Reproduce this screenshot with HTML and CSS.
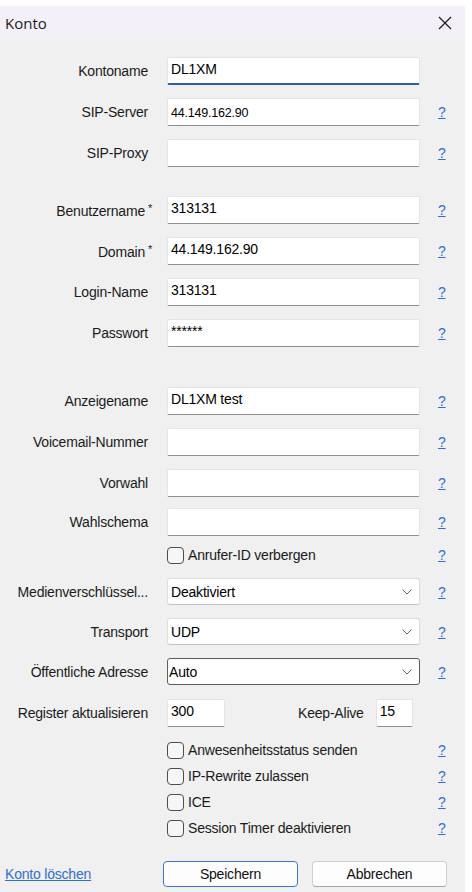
FILE: index.html
```html
<!DOCTYPE html>
<html lang="de">
<head>
<meta charset="utf-8">
<title>Konto</title>
<link rel="stylesheet" href="styles.css">
</head>
<body>
<div class="dialog">
  <header class="titlebar">
    <span class="title">Konto</span>
    <svg class="close" width="14" height="14" viewBox="0 0 14 14" aria-label="Schließen"><path d="M1 1L13 13M13 1L1 13" stroke="#1f1f1f" stroke-width="1.3" fill="none"/></svg>
  </header>
  <main class="content">
    <section class="group">
      <div class="row">
        <label class="lbl">Kontoname</label>
        <input class="field focused" value="DL1XM">
      </div>
      <div class="row">
        <label class="lbl">SIP-Server</label>
        <input class="field small-text" value="44.149.162.90">
        <a class="help" href="#">?</a>
      </div>
      <div class="row">
        <label class="lbl">SIP-Proxy</label>
        <input class="field" value="">
        <a class="help" href="#">?</a>
      </div>
    </section>

    <section class="group g2">
      <div class="row">
        <label class="lbl">Benutzername<span class="req">*</span></label>
        <input class="field" value="313131">
        <a class="help" href="#">?</a>
      </div>
      <div class="row">
        <label class="lbl">Domain<span class="req">*</span></label>
        <input class="field" value="44.149.162.90">
        <a class="help" href="#">?</a>
      </div>
      <div class="row">
        <label class="lbl">Login-Name</label>
        <input class="field" value="313131">
        <a class="help" href="#">?</a>
      </div>
      <div class="row">
        <label class="lbl">Passwort</label>
        <input class="field" value="******">
        <a class="help" href="#">?</a>
      </div>
    </section>

    <section class="group g3">
      <div class="row">
        <label class="lbl">Anzeigename</label>
        <input class="field" value="DL1XM test">
        <a class="help" href="#">?</a>
      </div>
      <div class="row">
        <label class="lbl">Voicemail-Nummer</label>
        <input class="field" value="">
        <a class="help" href="#">?</a>
      </div>
      <div class="row">
        <label class="lbl">Vorwahl</label>
        <input class="field" value="">
        <a class="help" href="#">?</a>
      </div>
      <div class="row tight">
        <label class="lbl">Wahlschema</label>
        <input class="field" value="">
        <a class="help" href="#">?</a>
      </div>
      <div class="row cbrow-first">
        <span class="lbl"></span>
        <label class="cb"><span class="box"></span>Anrufer-ID verbergen</label>
        <a class="help" href="#">?</a>
      </div>
    </section>

    <section class="group g4">
      <div class="row sel">
        <label class="lbl">Medienverschlüssel...</label>
        <div class="select"><span>Deaktiviert</span><svg width="10" height="6" viewBox="0 0 10 6"><path d="M0.5 0.5L5 5L9.5 0.5" stroke="#6b6b6b" stroke-width="1" fill="none"/></svg></div>
        <a class="help" href="#">?</a>
      </div>
      <div class="row sel">
        <label class="lbl">Transport</label>
        <div class="select"><span>UDP</span><svg width="10" height="6" viewBox="0 0 10 6"><path d="M0.5 0.5L5 5L9.5 0.5" stroke="#6b6b6b" stroke-width="1" fill="none"/></svg></div>
        <a class="help" href="#">?</a>
      </div>
      <div class="row sel">
        <label class="lbl">Öffentliche Adresse</label>
        <div class="select active"><span>Auto</span><svg width="10" height="6" viewBox="0 0 10 6"><path d="M0.5 0.5L5 5L9.5 0.5" stroke="#6b6b6b" stroke-width="1" fill="none"/></svg></div>
        <a class="help" href="#">?</a>
      </div>
      <div class="row reg">
        <label class="lbl">Register aktualisieren</label>
        <input class="field num" value="300">
        <label class="ka">Keep-Alive</label>
        <input class="field num2" value="15">
      </div>
    </section>

    <section class="checks">
      <div class="row cbrow">
        <span class="lbl"></span>
        <label class="cb"><span class="box"></span>Anwesenheitsstatus senden</label>
        <a class="help" href="#">?</a>
      </div>
      <div class="row cbrow">
        <span class="lbl"></span>
        <label class="cb"><span class="box"></span>IP-Rewrite zulassen</label>
        <a class="help" href="#">?</a>
      </div>
      <div class="row cbrow">
        <span class="lbl"></span>
        <label class="cb"><span class="box"></span>ICE</label>
        <a class="help" href="#">?</a>
      </div>
      <div class="row cbrow">
        <span class="lbl"></span>
        <label class="cb"><span class="box"></span>Session Timer deaktivieren</label>
        <a class="help" href="#">?</a>
      </div>
    </section>

    <footer class="footer">
      <a class="delete" href="#">Konto löschen</a>
      <button class="btn primary">Speichern</button>
      <button class="btn">Abbrechen</button>
    </footer>
  </main>
</div>
</body>
</html>
```

FILE: styles.css
```css
html, body {
  margin: 0;
  padding: 0;
  background: #ffffff;
}

body {
  font-family: "Liberation Sans", Arial, sans-serif;
  font-size: 14px;
  color: #1a1a1a;
  letter-spacing: -0.2px;
}

.dialog {
  width: 465px;
  margin-top: 6px;
  height: 886px;
  display: flex;
  flex-direction: column;
  background: #f0f0f0;
}

.titlebar {
  height: 34px;
  flex: none;
  background: #f3f0f8;
  display: flex;
  align-items: center;
  justify-content: space-between;
  padding: 0 13px 0 5px;
  box-sizing: border-box;
}

.title {
  font-family: "Open Sans", "Noto Sans", sans-serif;
  font-size: 15px;
  font-weight: 400;
  letter-spacing: 0;
  color: #1a1a1a;
}

.close {
  display: block;
  margin-top: -1px;
}

.content {
  flex: 1;
  padding-top: 17px;
  display: flex;
  flex-direction: column;
}

.group {
  display: flex;
  flex-direction: column;
  gap: 13px;
}

.g2 { margin-top: 29px; }
.g3 { margin-top: 40px; }
.g4 { margin-top: 9px; }

.row {
  display: flex;
  align-items: center;
  height: 28px;
}

.row.tight { margin-top: -2px; }
.row.cbrow-first { margin-top: -8px; }

.lbl {
  width: 148px;
  flex: none;
  text-align: right;
  margin-right: 19px;
  color: #1a1a1a;
  white-space: nowrap;
}

.req {
  display: inline-block;
  width: 0;
  font-size: 11px;
  vertical-align: 4px;
  margin-left: 3px;
  text-align: left;
}

.field {
  width: 253px;
  height: 28px;
  box-sizing: border-box;
  flex: none;
  background: #ffffff;
  border: 1px solid #e4e4e4;
  border-bottom-color: #8f8f8f;
  border-radius: 2px;
  padding: 0 3px 4px;
  margin: 0;
  font-family: "Liberation Sans", Arial, sans-serif;
  font-size: 14px;
  letter-spacing: -0.2px;
  color: #000;
  outline: none;
}

.field.focused {
  border-bottom: 2px solid #2a5fb8;
  padding-bottom: 3px;
}

.field.small-text {
  font-size: 12.5px;
  padding: 2px 3px 0;
}

.help {
  margin-left: 18px;
  color: #2f6ed6;
  text-decoration: underline;
  font-size: 14px;
}

.cb {
  width: 253px;
  flex: none;
  display: flex;
  align-items: center;
  color: #1a1a1a;
}

.box {
  width: 17px;
  height: 17px;
  box-sizing: border-box;
  border: 1px solid #4d4d4d;
  border-radius: 4px;
  background: #f6f6f6;
  margin-right: 4px;
  flex: none;
}

.row.sel { height: 27px; }

.select {
  width: 253px;
  height: 27px;
  flex: none;
  box-sizing: border-box;
  background: #ffffff;
  border: 1px solid #dcdcdc;
  border-bottom-color: #c4c4c4;
  border-radius: 3px;
  display: flex;
  align-items: center;
  justify-content: space-between;
  padding: 0 7px 0 3px;
  color: #000;
}

.select.active {
  border: 1px solid #5c5c5c;
  padding-left: 1px;
}

.select svg { display: block; }

.row.reg {
  margin-top: 1px;
}

.field.num {
  width: 58px;
}

.ka {
  margin-left: 73px;
  color: #1a1a1a;
}

.field.num2 {
  width: 37px;
  margin-left: 12px;
}

.checks {
  margin-top: 10px;
  display: flex;
  flex-direction: column;
}

.row.cbrow { height: 26px; }

.footer {
  margin-top: 20px;
  display: flex;
  align-items: center;
  padding-left: 5px;
}

.delete {
  width: 158px;
  color: #2f6ed6;
  text-decoration: underline;
}

.btn {
  width: 135px;
  height: 26px;
  box-sizing: border-box;
  background: #fdfdfd;
  border: 1px solid #d0d0d0;
  border-bottom-color: #a8a8a8;
  border-radius: 4px;
  font-family: "Liberation Sans", Arial, sans-serif;
  font-size: 14px;
  letter-spacing: -0.2px;
  color: #111;
  padding: 0;
}

.btn.primary {
  border: 1px solid #3d74d2;
  margin-right: 14px;
}
```
